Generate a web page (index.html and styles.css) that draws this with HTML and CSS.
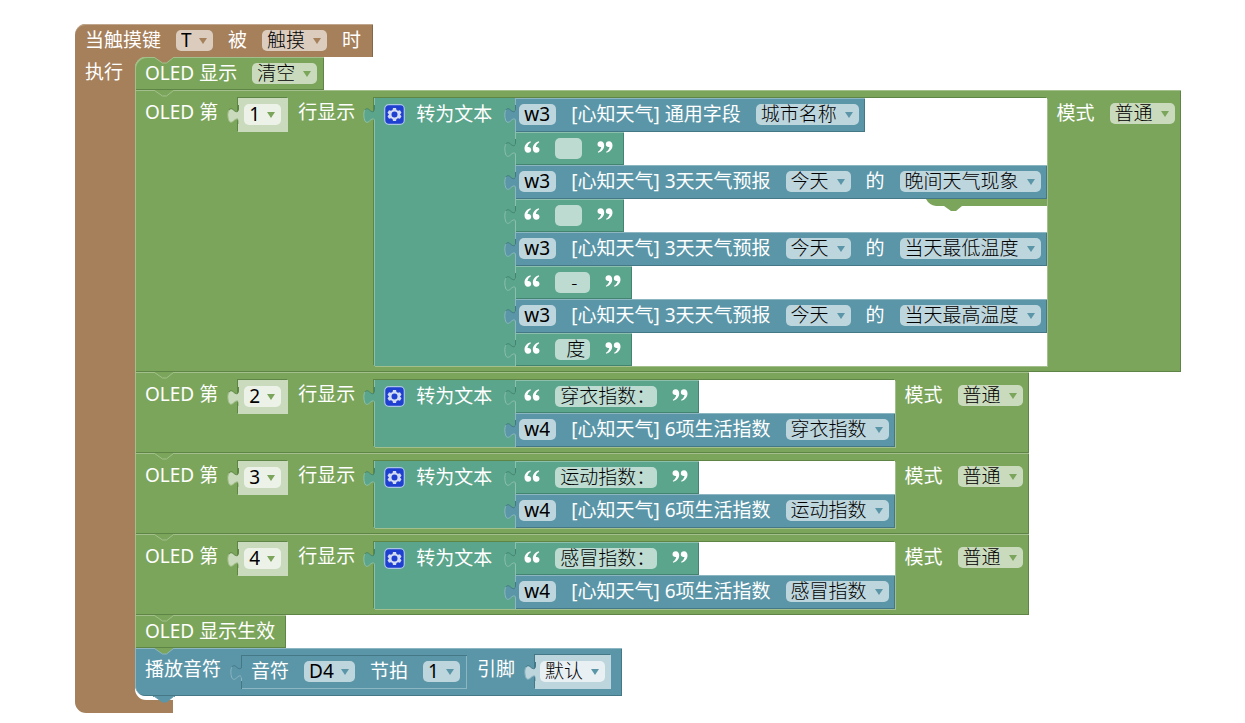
FILE: index.html
```
<!DOCTYPE html>
<html lang="zh-CN">
<head>
    <title>OLED 天气</title>
    <meta charset="UTF-8">
    <meta name="viewport" content="width=device-width, initial-scale=1.0">
    <link rel="stylesheet" href="styles.css">
</head>
<body>

<!-- shared shapes -->
<svg class="defs" aria-hidden="true">
    <symbol id="tab" viewBox="0 0 12 22">
        <path class="tab-fill" d="M12 1V5C12 9 8.500 8 6.500 6C3 3 1 7 1 11C1 16 3 20 6.500 17C8.500 15 12 13 12 18V20Z"/>
        <path class="tab-dark" d="M11.500 1V5C11.500 9 8.500 8 6.500 6C4 3.500 2 5 1.500 7"/>
        <path class="tab-light" d="M2 6C0 9 1 15 2 17C3 19 5 18.500 6.500 17C8.500 15 11.500 13 11.500 18V20"/>
    </symbol>
    <symbol id="notch" viewBox="0 0 22 7">
        <path class="notch-fill" d="M0 0H1L9.500 6H13.500L21 0H22Z"/>
        <path class="notch-line" d="M0 .5H1.500L9.500 6H13.500L20.500 .5H22"/>
    </symbol>
    <symbol id="open" viewBox="0 0 16 12">
        <path d="M6.500 .3C3 1.300 .5 4 .5 7.500C.5 10 1.800 11.700 4 11.700C5.900 11.700 7.200 10.400 7.200 8.700C7.200 7 6 5.900 4.300 5.900C4 5.900 3.700 6 3.500 6.100C3.800 4 5 2.400 6.900 1.200ZM14.800 .3C11.300 1.300 8.800 4 8.800 7.500C8.800 10 10.100 11.700 12.300 11.700C14.200 11.700 15.500 10.400 15.500 8.700C15.500 7 14.300 5.900 12.600 5.900C12.300 5.900 12 6 11.800 6.100C12.100 4 13.300 2.400 15.200 1.200Z"/>
    </symbol>
    <symbol id="close" viewBox="0 0 16 12">
        <use href="#open" width="16" height="12" transform="rotate(180 8 6)"/>
    </symbol>
    <symbol id="gear" viewBox="0 0 21 21">
        <rect x=".7" y=".7" width="19.600" height="19.600" rx="4" fill="#1f3fd0" stroke="#a9c6e4" stroke-width="1.200"/>
        <path fill="#d3dcf3" fill-rule="evenodd" d="M9 4H12L12.500 6L14 6.800L16 6.200L17.500 8.800L16 10.500L17.500 12.200L16 14.800L14 14.200L12.500 15L12 17H9L8.500 15L7 14.200L5 14.800L3.500 12.200L5 10.500L3.500 8.800L5 6.200L7 6.800L8.500 6ZM10.500 7.500A3 3 0 1 0 10.500 13.500A3 3 0 1 0 10.500 7.500Z"/>
    </symbol>
</svg>

<main class="workspace">
    <section class="event brown">
        <header class="event-head">
            <span>当触摸键</span>
            <span class="field latin"><select aria-label="触摸键"><option>T</option></select></span>
            <span>被</span>
            <span class="field"><select aria-label="动作"><option>触摸</option></select></span>
            <span>时</span>
        </header>
        <div class="event-body">
            <div class="event-arm">执行</div>
            <div class="stack">

                <div class="block green">
                    <svg class="notch from-brown"><use href="#notch"/></svg>
                    <div class="line">
                        <span>OLED 显示</span>
                        <span class="field"><select aria-label="OLED 显示"><option>清空</option></select></span>
                    </div>
                </div>

                <!-- line 1 -->
                <div class="block oled green">
                    <svg class="notch"><use href="#notch"/></svg>
                    <span class="label">OLED 第</span>
                    <div class="value shadow">
                        <svg class="tab"><use href="#tab"/></svg>
                        <span class="field latin"><select aria-label="行号"><option>1</option></select></span>
                    </div>
                    <span class="label">行显示</span>
                    <div class="join teal">
                        <svg class="tab"><use href="#tab"/></svg>
                        <div class="join-head">
                            <button class="gear" aria-label="设置"><svg><use href="#gear"/></svg></button>
                            <span>转为文本</span>
                        </div>
                        <div class="inputs">
                            <div class="row blue">
                                <svg class="tab"><use href="#tab"/></svg>
                                <input class="field name" aria-label="名称" value="w3">
                                <span>[心知天气] 通用字段</span>
                                <span class="field"><select aria-label="通用字段"><option>城市名称</option></select></span>
                            </div>
                            <div class="row text teal">
                                <svg class="tab"><use href="#tab"/></svg>
                                <svg class="quote"><use href="#open"/></svg>
                                <input class="field empty" aria-label="文本" value=" ">
                                <svg class="quote"><use href="#close"/></svg>
                            </div>
                            <div class="row blue">
                                <svg class="tab"><use href="#tab"/></svg>
                                <input class="field name" aria-label="名称" value="w3">
                                <span>[心知天气] 3天天气预报</span>
                                <span class="field"><select aria-label="日期"><option>今天</option></select></span>
                                <span>的</span>
                                <span class="field"><select aria-label="预报"><option>晚间天气现象</option></select></span>
                                <!-- edge of a loose block lying underneath -->
                                <svg class="loose" viewBox="0 0 121 12"><path d="M0 0H121V7H36L30 12H25L18 7H10Q3 6 0 0Z"/></svg>
                            </div>
                            <div class="row text teal">
                                <svg class="tab"><use href="#tab"/></svg>
                                <svg class="quote"><use href="#open"/></svg>
                                <input class="field empty" aria-label="文本" value=" ">
                                <svg class="quote"><use href="#close"/></svg>
                            </div>
                            <div class="row blue">
                                <svg class="tab"><use href="#tab"/></svg>
                                <input class="field name" aria-label="名称" value="w3">
                                <span>[心知天气] 3天天气预报</span>
                                <span class="field"><select aria-label="日期"><option>今天</option></select></span>
                                <span>的</span>
                                <span class="field"><select aria-label="预报"><option>当天最低温度</option></select></span>
                            </div>
                            <div class="row text teal">
                                <svg class="tab"><use href="#tab"/></svg>
                                <svg class="quote"><use href="#open"/></svg>
                                <input class="field short" aria-label="文本" value=" -">
                                <svg class="quote"><use href="#close"/></svg>
                            </div>
                            <div class="row blue">
                                <svg class="tab"><use href="#tab"/></svg>
                                <input class="field name" aria-label="名称" value="w3">
                                <span>[心知天气] 3天天气预报</span>
                                <span class="field"><select aria-label="日期"><option>今天</option></select></span>
                                <span>的</span>
                                <span class="field"><select aria-label="预报"><option>当天最高温度</option></select></span>
                            </div>
                            <div class="row text teal">
                                <svg class="tab"><use href="#tab"/></svg>
                                <svg class="quote"><use href="#open"/></svg>
                                <input class="field short" aria-label="文本" value="度">
                                <svg class="quote"><use href="#close"/></svg>
                            </div>
                        </div>
                    </div>
                    <div class="mode">
                        <span>模式</span>
                        <span class="field"><select aria-label="模式"><option>普通</option></select></span>
                    </div>
                </div>

                <!-- line 2 -->
                <div class="block oled green">
                    <svg class="notch"><use href="#notch"/></svg>
                    <span class="label">OLED 第</span>
                    <div class="value shadow">
                        <svg class="tab"><use href="#tab"/></svg>
                        <span class="field latin"><select aria-label="行号"><option>2</option></select></span>
                    </div>
                    <span class="label">行显示</span>
                    <div class="join teal">
                        <svg class="tab"><use href="#tab"/></svg>
                        <div class="join-head">
                            <button class="gear" aria-label="设置"><svg><use href="#gear"/></svg></button>
                            <span>转为文本</span>
                        </div>
                        <div class="inputs">
                            <div class="row text teal">
                                <svg class="tab"><use href="#tab"/></svg>
                                <svg class="quote"><use href="#open"/></svg>
                                <input class="field long" aria-label="文本" value="穿衣指数：">
                                <svg class="quote"><use href="#close"/></svg>
                            </div>
                            <div class="row blue">
                                <svg class="tab"><use href="#tab"/></svg>
                                <input class="field name" aria-label="名称" value="w4">
                                <span>[心知天气] 6项生活指数</span>
                                <span class="field"><select aria-label="生活指数"><option>穿衣指数</option></select></span>
                            </div>
                        </div>
                    </div>
                    <div class="mode">
                        <span>模式</span>
                        <span class="field"><select aria-label="模式"><option>普通</option></select></span>
                    </div>
                </div>

                <!-- line 3 -->
                <div class="block oled green">
                    <svg class="notch"><use href="#notch"/></svg>
                    <span class="label">OLED 第</span>
                    <div class="value shadow">
                        <svg class="tab"><use href="#tab"/></svg>
                        <span class="field latin"><select aria-label="行号"><option>3</option></select></span>
                    </div>
                    <span class="label">行显示</span>
                    <div class="join teal">
                        <svg class="tab"><use href="#tab"/></svg>
                        <div class="join-head">
                            <button class="gear" aria-label="设置"><svg><use href="#gear"/></svg></button>
                            <span>转为文本</span>
                        </div>
                        <div class="inputs">
                            <div class="row text teal">
                                <svg class="tab"><use href="#tab"/></svg>
                                <svg class="quote"><use href="#open"/></svg>
                                <input class="field long" aria-label="文本" value="运动指数：">
                                <svg class="quote"><use href="#close"/></svg>
                            </div>
                            <div class="row blue">
                                <svg class="tab"><use href="#tab"/></svg>
                                <input class="field name" aria-label="名称" value="w4">
                                <span>[心知天气] 6项生活指数</span>
                                <span class="field"><select aria-label="生活指数"><option>运动指数</option></select></span>
                            </div>
                        </div>
                    </div>
                    <div class="mode">
                        <span>模式</span>
                        <span class="field"><select aria-label="模式"><option>普通</option></select></span>
                    </div>
                </div>

                <!-- line 4 -->
                <div class="block oled green">
                    <svg class="notch"><use href="#notch"/></svg>
                    <span class="label">OLED 第</span>
                    <div class="value shadow">
                        <svg class="tab"><use href="#tab"/></svg>
                        <span class="field latin"><select aria-label="行号"><option>4</option></select></span>
                    </div>
                    <span class="label">行显示</span>
                    <div class="join teal">
                        <svg class="tab"><use href="#tab"/></svg>
                        <div class="join-head">
                            <button class="gear" aria-label="设置"><svg><use href="#gear"/></svg></button>
                            <span>转为文本</span>
                        </div>
                        <div class="inputs">
                            <div class="row text teal">
                                <svg class="tab"><use href="#tab"/></svg>
                                <svg class="quote"><use href="#open"/></svg>
                                <input class="field long" aria-label="文本" value="感冒指数：">
                                <svg class="quote"><use href="#close"/></svg>
                            </div>
                            <div class="row blue">
                                <svg class="tab"><use href="#tab"/></svg>
                                <input class="field name" aria-label="名称" value="w4">
                                <span>[心知天气] 6项生活指数</span>
                                <span class="field"><select aria-label="生活指数"><option>感冒指数</option></select></span>
                            </div>
                        </div>
                    </div>
                    <div class="mode">
                        <span>模式</span>
                        <span class="field"><select aria-label="模式"><option>普通</option></select></span>
                    </div>
                </div>

                <div class="block green">
                    <svg class="notch"><use href="#notch"/></svg>
                    <div class="line">
                        <span>OLED 显示生效</span>
                    </div>
                </div>

                <div class="block play blue">
                    <svg class="notch from-green"><use href="#notch"/></svg>
                    <span class="label">播放音符</span>
                    <div class="value note">
                        <svg class="tab"><use href="#tab"/></svg>
                        <span>音符</span>
                        <span class="field latin"><select aria-label="音符"><option>D4</option></select></span>
                        <span>节拍</span>
                        <span class="field latin"><select aria-label="节拍"><option>1</option></select></span>
                    </div>
                    <span class="label">引脚</span>
                    <div class="value shadow">
                        <svg class="tab"><use href="#tab"/></svg>
                        <span class="field"><select aria-label="引脚"><option>默认</option></select></span>
                    </div>
                    <svg class="notch last"><use href="#notch"/></svg>
                </div>

            </div>
        </div>
    </section>
</main>

</body>
</html>
```
FILE: styles.css
```
    body{
        margin:0;
        background-color:#fff;
        font:normal 19px/21px "Noto Sans", "Noto Sans CJK SC", sans-serif;
        color:#fff;
        white-space:nowrap;
    }
    .defs{
        position:absolute;
        width:0;
        height:0;
    }
    .workspace{
        padding:24px 0 0 75px;
    }
/* colours */
    .brown{
        --c:#a5805b;
        --light:#c0a68c;
        --dark:#84664a;
    }
    .green{
        --c:#7ba55b;
        --light:#a3c08c;
        --dark:#5f8546;
    }
    .teal{
        --c:#5ba58c;
        --light:#8cc0ae;
        --dark:#438470;
    }
    .blue{
        --c:#5b96a8;
        --light:#8cb6c2;
        --dark:#447887;
    }
/* event */
    .event{
        display:flex;
        flex-direction:column;
        align-items:flex-start;
    }
    .event-head{
        display:flex;
        gap:15px;
        height:33px;
        padding:6px 12px 0 10px;
        box-sizing:border-box;
        background-color:var(--c);
        border-radius:11px 0 0 0;
        box-shadow:inset 0 1px 0 var(--light), inset -1px 0 0 var(--dark);
    }
    .event-body{
        display:flex;
        padding-bottom:13px;
        background:linear-gradient(var(--c), var(--c)) no-repeat left top / 98px 100%;
        border-radius:0 0 0 11px;
    }
    .event-arm{
        width:60px;
        padding:5px 0 0 10px;
        box-sizing:border-box;
    }
    .stack{
        display:flex;
        flex-direction:column;
        align-items:flex-start;
        padding-bottom:4px;
        background-color:#fff;
        border-radius:11px 0 0 11px;
    }
/* statement blocks */
    .block{
        position:relative;
        display:flex;
        align-items:flex-start;
        box-sizing:border-box;
        min-height:33px;
        padding-left:10px;
        background-color:var(--c);
        box-shadow:inset 1px 1px 0 var(--light), inset -1px -1px 0 var(--dark);
    }
    .block:first-child{
        border-radius:11px 0 0 0;
    }
    .block .line{
        display:flex;
        gap:15px;
        padding:6px 7px 0 0;
    }
    .block .line span:last-child:not(.field){
        padding-right:4px;
    }
    .oled{
        padding:8px 6px 6px 10px;
    }
    .block .label{
        padding-top:4px;
    }
    .block .mode{
        display:flex;
        gap:15px;
        padding:5px 0 0 10px;
    }
    .play{
        padding:7px 11px 7px 10px;
        border-radius:0 0 0 11px;
    }
    .notch{
        position:absolute;
        top:0;
        left:18px;
        width:22px;
        height:7px;
        color:var(--c);
    }
    .notch.from-brown{
        color:#a5805b;
    }
    .notch.from-green{
        color:#7ba55b;
    }
    .notch.last{
        top:100%;
        --light:var(--c);
    }
    .notch-fill{
        fill:currentColor;
    }
    .notch-line{
        fill:none;
        stroke:var(--light);
    }
/* value blocks */
    .value{
        position:relative;
        display:flex;
        height:34px;
        margin:0 10px 0 20px;
        padding:6px 7px 0 6px;
        box-sizing:border-box;
        background-color:var(--c);
        box-shadow:inset 1px 1px 0 var(--dark), inset -1px -1px 0 var(--light);
    }
    .value.note{
        gap:15px;
        padding-left:10px;
    }
    .value.shadow{
        --tab:#cadbbd;
        background-color:var(--tab);
        box-shadow:-1px -1px 0 var(--dark);
    }
    .play .value.shadow{
        --tab:#bdd5dc;
        margin-right:0;
        padding:6px 6px 0 5px;
    }
    .tab{
        position:absolute;
        top:6px;
        left:-11px;
        width:12px;
        height:22px;
    }
    .tab-fill{
        fill:var(--tab, var(--c));
    }
    .tab-dark, .tab-light{
        fill:none;
        stroke:var(--dark);
    }
    .tab-light{
        stroke:var(--light);
    }
    .shadow .tab-dark, .shadow .tab-light{
        stroke:var(--tab);
    }
/* join */
    .join{
        position:relative;
        display:flex;
        margin-left:19px;
        background-color:var(--c);
        box-shadow:-1px -1px 0 #5f8546, 1px 1px 0 #a3c08c, inset 1px 0 0 var(--light);
    }
    .join-head{
        display:flex;
        gap:11px;
        padding:6px 23px 0 10px;
    }
    .gear{
        width:21px;
        height:21px;
        padding:0;
        border:0;
        background:none;
    }
    .gear svg{
        display:block;
        width:21px;
        height:21px;
    }
    .inputs{
        display:flex;
        flex-direction:column;
        align-items:flex-start;
        background-color:#fff;
    }
    .row{
        position:relative;
        display:flex;
        gap:15px;
        height:34px;
        padding:6px 6px 0 4px;
        box-sizing:border-box;
        background-color:var(--c);
        box-shadow:inset 1px 1px 0 var(--light), inset -1px -1px 0 var(--dark);
    }
    .row.text{
        height:33px;
        padding:6px 11px 0 9px;
    }
    .quote{
        width:16px;
        height:12px;
        margin-top:3px;
        fill:#fff;
    }
    .loose{
        position:absolute;
        top:100%;
        right:0;
        width:121px;
        height:12px;
        fill:#7ba55b;
    }
/* fields */
    .field{
        display:flex;
        align-items:center;
        gap:7px;
        height:21px;
        padding:0 6px 0 5px;
        box-sizing:border-box;
        background-color:rgba(255,255,255,.6);
        border:0;
        border-radius:5px;
        font:inherit;
        font-weight:300;
        color:#000;
    }
    .field select{
        height:21px;
        padding:0;
        border:0;
        appearance:none;
        background:none;
        font:inherit;
        color:#000;
    }
    .field:has(select)::after{
        content:"";
        border:4px solid transparent;
        border-top:6px solid var(--c);
        border-bottom:0;
    }
    .value.shadow .field{
        background-color:rgba(255,255,255,.65);
    }
    .field.latin, .field.name{
        font-weight:400;
    }
    .field.name{
        width:37px;
    }
    .field.empty{
        width:27px;
    }
    .field.short{
        width:35px;
        padding:0 0 0 11px;
    }
    .field.long{
        width:102px;
        font-family:"Noto Sans", "Noto Sans CJK TC", sans-serif;
    }
```
